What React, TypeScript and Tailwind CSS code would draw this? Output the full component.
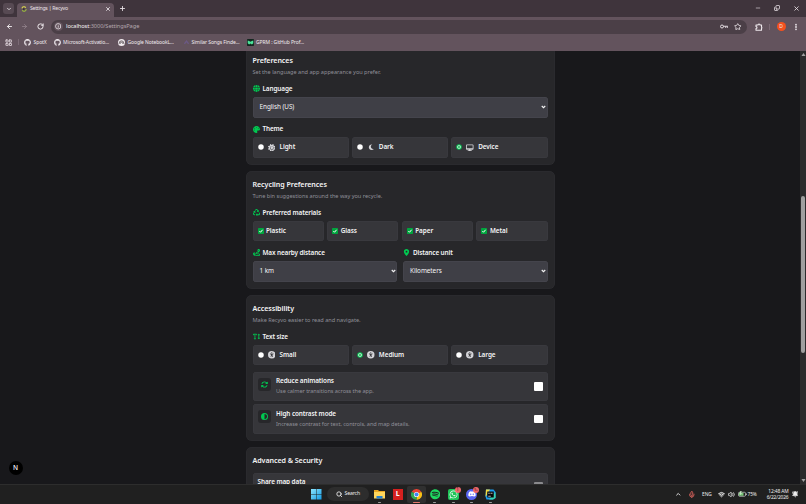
import React from "react";
import {
  FaGlobe,
  FaPalette,
  FaSun,
  FaMoon,
  FaRecycle,
  FaRoute,
  FaLocationDot,
  FaTextHeight,
  FaUniversalAccess,
  FaArrowsRotate,
  FaCircleHalfStroke,
  FaDesktop,
  FaGithub,
  FaSpotify,
  FaWhatsapp,
  FaDiscord,
} from "react-icons/fa6";
import {
  ArrowLeft,
  ArrowRight,
  RotateCw,
  ChevronDown,
  ChevronUp,
  X,
  Plus,
  Minus,
  Copy,
  Star,
  EllipsisVertical,
  LayoutGrid,
  Info,
  Search,
  Mic,
  Wifi,
  Volume2,
  BellRing,
} from "lucide-react";

/* ---------- browser ---------- */

const TabStrip = () => (
  <div className="flex h-[17px] bg-[#3f343c] text-[#e9e2e7]">
    <div className="mt-[3px] ml-[3px] flex h-[11px] w-[11px] items-center justify-center rounded-[3px] bg-[#574a53]">
      <ChevronDown size={6} strokeWidth={3.5} />
    </div>
    <div className="mt-[3px] ml-[3px] flex h-[14px] w-[97px] items-center rounded-t-[4px] bg-[#63535d] pb-[2px] pl-[3.5px]">
      <svg viewBox="0 0 10 10" className="h-[6px] w-[6px] shrink-0">
        <path d="M1.5 4A3.6 3.6 0 0 1 8 3" fill="none" stroke="#e3e04a" strokeWidth="1.8" />
        <path d="M8.6 5A3.6 3.6 0 0 1 2 7.2" fill="none" stroke="#9bbd3c" strokeWidth="1.8" />
        <circle cx="4.6" cy="5" r="1.4" fill="#2b2a20" />
      </svg>
      <span className="ml-[3.5px] w-[74.5px] text-[5.2px] tracking-[-0.27px] whitespace-nowrap">
        Settings | Recyvo
      </span>
      <X size={6} strokeWidth={3.4} />
    </div>
    <Plus size={7} strokeWidth={3} className="mt-[5px] ml-[5px]" />
    <div className="mt-[5px] mr-[6px] ml-auto flex gap-[13px]">
      <Minus size={6} strokeWidth={2.4} />
      <Copy size={6} strokeWidth={3} className="-scale-x-100 rotate-180" />
      <X size={7} strokeWidth={2.8} />
    </div>
  </div>
);

const Toolbar = () => (
  <div className="flex h-[19px] items-center bg-[#63535d] text-[#efe9ed]">
    <ArrowLeft size={7} strokeWidth={3.2} className="ml-[6px]" />
    <ArrowRight size={7} strokeWidth={2.6} className="ml-[8px] text-[#95858f]" />
    <RotateCw size={7} strokeWidth={3.4} className="ml-[8.5px]" />
    <div className="ml-[7.5px] flex h-[14px] w-[696px] items-center rounded-full bg-[#4b3f47] pl-[2.5px]">
      <div className="flex h-[9px] w-[9px] items-center justify-center rounded-full bg-[#63535d]">
        <Info size={6.5} strokeWidth={2.8} />
      </div>
      <span className="ml-[3.5px] text-[5.7px] tracking-[-0.09px] text-[#b3a7ae]">
        <span className="text-[#f5f1f3]">localhost</span>:3000/SettingsPage
      </span>
      <svg viewBox="0 0 16 10" className="ml-auto h-[5px] w-[8px]">
        <circle cx="4" cy="5" r="3" fill="none" stroke="currentColor" strokeWidth="1.8" />
        <path d="M7 4.5h8.500V8M11.500 5v3" fill="none" stroke="currentColor" strokeWidth="1.8" />
      </svg>
      <Star size={7.5} strokeWidth={2.6} className="mr-[5.5px] ml-[6px]" />
    </div>
    <svg viewBox="0 0 16 16" className="ml-[8px] h-[8px] w-[8px]">
      <path
        d="M2 4h4a2 2 0 0 1 4 0h3v4a2 2 0 0 1 0 3v3.500H2V11a2 2 0 0 0 0-4z"
        fill="none"
        stroke="currentColor"
        strokeWidth="2.2"
        strokeLinejoin="round"
      />
    </svg>
    <div className="ml-[6px] h-[6px] w-px bg-[#7b6a75]" />
    <div className="ml-[6.5px] flex h-[9px] w-[9px] items-center justify-center rounded-full bg-[#f4511e] text-[5px]">
      D
    </div>
    <EllipsisVertical size={8} strokeWidth={3.6} className="ml-[6.5px]" />
  </div>
);

const Bookmarks = () => (
  <div className="flex h-[15px] items-center bg-[#63535d] pb-[2.5px] text-[5px] tracking-[-0.09px] whitespace-nowrap text-[#f1ebef]">
    <LayoutGrid size={7.5} strokeWidth={3.2} className="ml-[4.5px] text-[#d6cbd2]" />
    <div className="ml-[6px] h-[6px] w-px bg-[#7b6a75]" />
    <FaGithub size={7} className="ml-[5px]" />
    <span className="ml-[2.5px] w-[17.5px]">SpotX</span>
    <FaGithub size={7} className="ml-[2.5px]" />
    <span className="ml-[2.5px] w-[50px]">Microsoft-Activatio...</span>
    <svg viewBox="0 0 10 10" className="ml-[5px] h-[7px] w-[7px]">
      <circle cx="5" cy="5" r="5" fill="#f1ebef" />
      <path d="M1.7 7V6a3.3 3.3 0 0 1 6.6 0v1M3.3 7V6.3a1.7 1.7 0 0 1 3.4 0V7" fill="none" stroke="#3c3339" strokeWidth="1" />
    </svg>
    <span className="ml-[2.5px] w-[50px]">Google NotebookL...</span>
    <svg viewBox="0 0 10 10" className="ml-[5.5px] h-[7px] w-[7px]">
      <path d="M2 7 5 3l3 4" fill="none" stroke="#6b5985" strokeWidth="2" />
    </svg>
    <span className="ml-[1.5px] w-[50px]">Similar Songs Finde...</span>
    <svg viewBox="0 0 10 10" className="ml-[5.5px] h-[7px] w-[7px]">
      <rect width="10" height="10" rx="1" fill="#13271f" />
      <path d="M1 2l2 1 2 1 2-1 2-1v4L7 8 5 6.5 3 8 1 6z" fill="#4be39a" />
    </svg>
    <span className="ml-[2px]">GPRM : GitHub Prof...</span>
  </div>
);

/* ---------- settings page ---------- */

type CardProps = { title: string; subtitle?: string; children: React.ReactNode };

const Card = ({ title, subtitle, children }: CardProps) => (
  <section className="rounded-[6px] bg-[#27272a] p-[7px] shadow-[inset_0_0_0_0.5px_#2f2f33]">
    <h2 className="h-[13px] text-[7.1px] leading-[13px] font-semibold tracking-[-0.06px] text-[#f4f4f5]">{title}</h2>
    {subtitle && (
      <p className="h-[11px] text-[5.6px] leading-[11px] tracking-[-0.02px] text-[#8f8f98]">{subtitle}</p>
    )}
    {children}
  </section>
);

const Label = ({ icon, text }: { icon: React.ReactNode; text: string }) => (
  <div className="mt-[5px] mb-[2.5px] flex h-[11px] items-center gap-[3px] text-[6.4px] font-semibold tracking-[-0.12px] text-[#f4f4f5]">
    <span className="flex w-[7px] justify-center text-[#00c951]">{icon}</span>
    {text}
  </div>
);

const Select = ({ value }: { value: string }) => (
  <div className="flex h-[21px] items-center justify-between rounded-[3.5px] bg-[#3f3f46] pr-[1.5px] pl-[7px] text-[6.4px] tracking-[-0.06px] text-[#f4f4f5] shadow-[inset_0_0_0_0.5px_#4a4a52]">
    {value}
    <svg viewBox="0 0 10 8" className="h-[4px] w-[5px]">
      <path d="m1.5 2 3.5 3.5L8.5 2" fill="none" stroke="currentColor" strokeWidth="2.2" />
    </svg>
  </div>
);

const Radio = ({ checked }: { checked?: boolean }) => (
  <svg viewBox="0 0 12 12" className="h-[6px] w-[6px]">
    <circle cx="6" cy="6" r="5.5" fill={checked ? "#05c653" : "#ffffff"} />
    {checked && <circle cx="6" cy="6" r="3.6" fill="#e5f5ea" />}
    {checked && <circle cx="6" cy="6" r="1.9" fill="#12a34b" />}
  </svg>
);

type OptionProps = { icon: React.ReactNode; text: string; checked?: boolean };

const Option = ({ icon, text, checked }: OptionProps) => (
  <div className="flex h-[20.5px] items-center rounded-[3.5px] bg-[#36363a] pl-[5px] text-[6.4px] font-semibold tracking-[-0.06px] text-[#f4f4f5] shadow-[inset_0_0_0_0.5px_#3d3d42]">
    <Radio checked={checked} />
    <span className="ml-[4px] flex w-[8px] justify-center text-[#d4d4d8]">{icon}</span>
    <span className="ml-[4px]">{text}</span>
  </div>
);

const Material = ({ text }: { text: string }) => (
  <div className="flex h-[20.5px] items-center rounded-[3.5px] bg-[#36363a] pl-[5px] text-[6.4px] font-semibold tracking-[-0.06px] text-[#f4f4f5] shadow-[inset_0_0_0_0.5px_#3d3d42]">
    <svg viewBox="0 0 12 12" className="h-[6px] w-[6px]">
      <rect width="12" height="12" rx="1.5" fill="#00a63e" />
      <path d="m2.8 6.2 2.2 2.3 4.2-5" fill="none" stroke="#fff" strokeWidth="2" />
    </svg>
    <span className="ml-[2.5px]">{text}</span>
  </div>
);

const ToggleRow = ({ icon, title, text }: { icon: React.ReactNode; title: string; text: string }) => (
  <div className="flex h-[29.5px] items-center rounded-[3.5px] bg-[#36363a] pr-[5px] pl-[5.5px] shadow-[inset_0_0_0_0.5px_#3d3d42]">
    <div className="mb-[4px] flex h-[13px] w-[13px] items-center justify-center rounded-[3px] bg-[#27272a] text-[#00c951]">
      {icon}
    </div>
    <div className="ml-[5px]">
      <p className="text-[6.4px] leading-[10px] font-semibold tracking-[-0.1px] text-[#f4f4f5]">{title}</p>
      <p className="text-[5.6px] leading-[10px] tracking-[-0.06px] text-[#8f8f98]">{text}</p>
    </div>
    <div className="ml-auto h-[8.5px] w-[8.5px] rounded-[1px] bg-white" />
  </div>
);

const materials = ["Plastic", "Glass", "Paper", "Metal"];

const SettingsPage = () => (
  <main className="relative flex h-[432.5px] overflow-hidden bg-[#18181b]">
    <div className="-mt-[4px] ml-[245.5px] flex w-[309px] shrink-0 flex-col gap-[6.5px]">
      <Card title="Preferences" subtitle="Set the language and app appearance you prefer.">
        <Label icon={<FaGlobe size={7} />} text="Language" />
        <Select value="English (US)" />
        <div className="pt-px">
          <Label icon={<FaPalette size={7} />} text="Theme" />
        </div>
        <div className="grid grid-cols-3 gap-[3px]">
          <Option icon={<FaSun size={7.5} />} text="Light" />
          <Option icon={<FaMoon size={6.5} />} text="Dark" />
          <Option icon={<FaDesktop size={7.5} />} text="Device" checked />
        </div>
      </Card>

      <Card title="Recycling Preferences" subtitle="Tune bin suggestions around the way you recycle.">
        <Label icon={<FaRecycle size={7} />} text="Preferred materials" />
        <div className="grid grid-cols-4 gap-[3.5px]">
          {materials.map((m) => (
            <Material key={m} text={m} />
          ))}
        </div>
        <div className="grid grid-cols-2 gap-[6px] pt-px">
          <div>
            <Label icon={<FaRoute size={7} />} text="Max nearby distance" />
            <Select value="1 km" />
          </div>
          <div>
            <Label icon={<FaLocationDot size={7} />} text="Distance unit" />
            <Select value="Kilometers" />
          </div>
        </div>
      </Card>

      <Card title="Accessibility" subtitle="Make Recyvo easier to read and navigate.">
        <Label icon={<FaTextHeight size={7} />} text="Text size" />
        <div className="grid grid-cols-3 gap-[3px]">
          <Option icon={<FaUniversalAccess size={7.5} />} text="Small" />
          <Option icon={<FaUniversalAccess size={7.5} />} text="Medium" checked />
          <Option icon={<FaUniversalAccess size={7.5} />} text="Large" />
        </div>
        <div className="mt-[6.5px] flex flex-col gap-[3px]">
          <ToggleRow
            icon={<FaArrowsRotate size={7} />}
            title="Reduce animations"
            text="Use calmer transitions across the app."
          />
          <ToggleRow
            icon={<FaCircleHalfStroke size={7} />}
            title="High contrast mode"
            text="Increase contrast for text, controls, and map details."
          />
        </div>
      </Card>

      <Card title="Advanced & Security">
        <div className="mt-[5.5px]">
          <div className="flex h-[29.5px] justify-between rounded-[3.5px] bg-[#36363a] pt-[4.5px] pr-[5px] pl-[5px] shadow-[inset_0_0_0_0.5px_#3d3d42]">
            <p className="text-[6.4px] leading-[10px] font-semibold tracking-[-0.08px] text-[#f4f4f5]">
              Share map data
            </p>
            <div className="mt-[5px] h-[8.5px] w-[8.5px] rounded-[1px] bg-[#8a8a8d]" />
          </div>
        </div>
      </Card>
    </div>

    {/* next.js dev badge */}
    <div className="absolute bottom-[8.5px] left-[8.5px] flex h-[14px] w-[14px] items-center justify-center rounded-full bg-black text-[6.5px] font-medium text-white">
      N
    </div>

    {/* scrollbar */}
    <div className="ml-auto flex w-[6px] flex-col items-center bg-[#2b2b2c]">
      <svg viewBox="0 0 6 6" className="mt-[1px] h-[5px] w-[5px]">
        <path d="M3 1.2 5.5 4.8h-5z" fill="#a0a0a0" />
      </svg>
      <div className="mt-[139px] h-[157px] w-[4px] rounded-full bg-[#9f9f9f]" />
      <svg viewBox="0 0 6 6" className="mt-auto mb-[1px] h-[5px] w-[5px]">
        <path d="M3 4.8 5.5 1.2h-5z" fill="#a0a0a0" />
      </svg>
    </div>
  </main>
);

/* ---------- taskbar ---------- */

const TaskIcon = ({ children, open }: { children: React.ReactNode; open?: boolean }) => (
  <div className="relative flex h-[17px] w-[18.5px] items-center justify-center">
    {children}
    {open && <span className="absolute bottom-[-0.5px] h-[1px] w-[3px] rounded-full bg-[#9b9b9b]" />}
  </div>
);

const Taskbar = () => (
  <footer className="flex h-[20.5px] items-center border-t border-[#2d2d2d] bg-[#202020] text-[#eeeeee]">
    <svg viewBox="0 0 21 21" className="ml-[311px] h-[10.5px] w-[10.5px]">
      <defs>
        <linearGradient id="win" x1="0" y1="0" x2="1" y2="1">
          <stop offset="0" stopColor="#8be4fd" />
          <stop offset="1" stopColor="#159be3" />
        </linearGradient>
      </defs>
      <path d="M0 0h10v10H0zM11 0h10v10H11zM0 11h10v10H0zM11 11h10v10H11z" fill="url(#win)" />
    </svg>
    <div className="ml-[5.5px] flex h-[14px] w-[42px] items-center rounded-full bg-[#2d2d2d] pl-[9px] text-[5.2px] tracking-[-0.15px]">
      <Search size={6.5} strokeWidth={3.2} className="mr-[2px]" />
      Search
    </div>
    <div className="ml-[1px] flex">
      <TaskIcon open>
        <svg viewBox="0 0 22 20" className="h-[10px] w-[11px]">
          <path d="M0 2h8l2 2h12v6H0z" fill="#e9a722" />
          <path d="M0 6h22v13H0z" fill="#ffd65c" />
          <path d="M5 14h12v5H5z" fill="#2581d0" />
        </svg>
      </TaskIcon>
      <TaskIcon>
        <div className="flex h-[10.5px] w-[10.5px] items-center justify-center bg-[#d6201f] text-[7px] font-bold text-white">
          L
        </div>
      </TaskIcon>
      <div className="relative flex h-[17px] w-[18.5px] items-center justify-center rounded-[2px] bg-[#303030]">
        <svg viewBox="0 0 24 24" className="h-[11px] w-[11px]">
          <path d="M12 12 1.6 6A12 12 0 0 1 22.4 6z" fill="#e94335" />
          <path d="M12 12 22.4 6A12 12 0 0 1 12 24z" fill="#fbc116" />
          <path d="M12 12v12A12 12 0 0 1 1.6 6z" fill="#31a853" />
          <circle cx="12" cy="12" r="5.6" fill="#fff" />
          <circle cx="12" cy="12" r="4.4" fill="#4285f4" />
        </svg>
        <span className="absolute bottom-[-0.5px] h-[1.5px] w-[7px] rounded-full bg-[#e8786b]" />
      </div>
      <TaskIcon open>
        <FaSpotify size={10.5} className="text-[#1ed760]" />
      </TaskIcon>
      <TaskIcon open>
        <div className="flex h-[11px] w-[11px] items-center justify-center rounded-[2px] bg-[#20c659] text-white">
          <FaWhatsapp size={9} />
        </div>
        <span className="absolute top-[1px] right-[2px] flex h-[6px] w-[6px] items-center justify-center rounded-full bg-[#f0676b] text-[4.5px] text-[#35191b]">
          1
        </span>
      </TaskIcon>
      <TaskIcon open>
        <div className="flex h-[11px] w-[11px] items-center justify-center rounded-full bg-[#5865f2] text-white">
          <FaDiscord size={8} />
        </div>
        <span className="absolute top-[1px] right-[2px] flex h-[6px] w-[6px] items-center justify-center rounded-full bg-[#f0676b] text-[3px] text-[#35191b]">
          9+
        </span>
      </TaskIcon>
      <TaskIcon open>
        <svg viewBox="0 0 22 22" className="h-[11px] w-[11px]">
          <path d="M2 1h15l4 5v12l-5 3H3l-2-6z" fill="#1c9df0" />
          <path d="M2 1h8L3 13l-2 2z" fill="#f5dc42" />
          <path d="M21 6v12l-5 3H8z" fill="#36d5b0" />
          <rect x="4.5" y="5" width="13" height="12" fill="#080808" />
          <path d="M6.5 8.5h3M11 8.5h4M6.5 14.5h5" stroke="#fff" strokeWidth="1.4" />
        </svg>
      </TaskIcon>
    </div>

    <div className="mr-[8px] ml-auto flex items-center text-[5px]">
      <ChevronUp size={6.5} strokeWidth={3.4} />
      <Mic size={7.5} strokeWidth={3} className="ml-[6px] text-[#d0605b]" />
      <span className="ml-[7px] w-[11px] text-[4.8px]">ENG</span>
      <Wifi size={7} strokeWidth={3.4} className="ml-[5px]" />
      <Volume2 size={7} strokeWidth={2.6} className="ml-[2.5px]" />
      <svg viewBox="0 0 18 12" className="ml-[3px] h-[6px] w-[9px]">
        <rect x="1" y="2.5" width="14" height="8" rx="2" fill="none" stroke="#d8d8d8" strokeWidth="1.4" />
        <rect x="2" y="3.5" width="9" height="6" fill="#7bc67a" />
        <path d="M5 0 2.5 5h2L3.5 9 8 4H5.5L7.5 0z" fill="#c9eec8" />
        <path d="M17 5v3" stroke="#d8d8d8" strokeWidth="1.4" />
      </svg>
      <span className="ml-[1px] w-[10px] text-[4.8px] tracking-[-0.1px]">75%</span>
      <div className="ml-[6px] w-[25px] text-right text-[4.9px] leading-[6.5px] tracking-[-0.15px] whitespace-nowrap">
        <p>12:48 AM</p>
        <p>6/22/2026</p>
      </div>
      <BellRing size={6.5} strokeWidth={2.8} fill="currentColor" className="ml-[3px]" />
    </div>
  </footer>
);

export default function App() {
  return (
    <div className="h-[504px] w-[806px] overflow-hidden bg-[#18181b] font-['Noto_Sans','Open_Sans',sans-serif]">
      <TabStrip />
      <Toolbar />
      <Bookmarks />
      <SettingsPage />
      <Taskbar />
    </div>
  );
}
